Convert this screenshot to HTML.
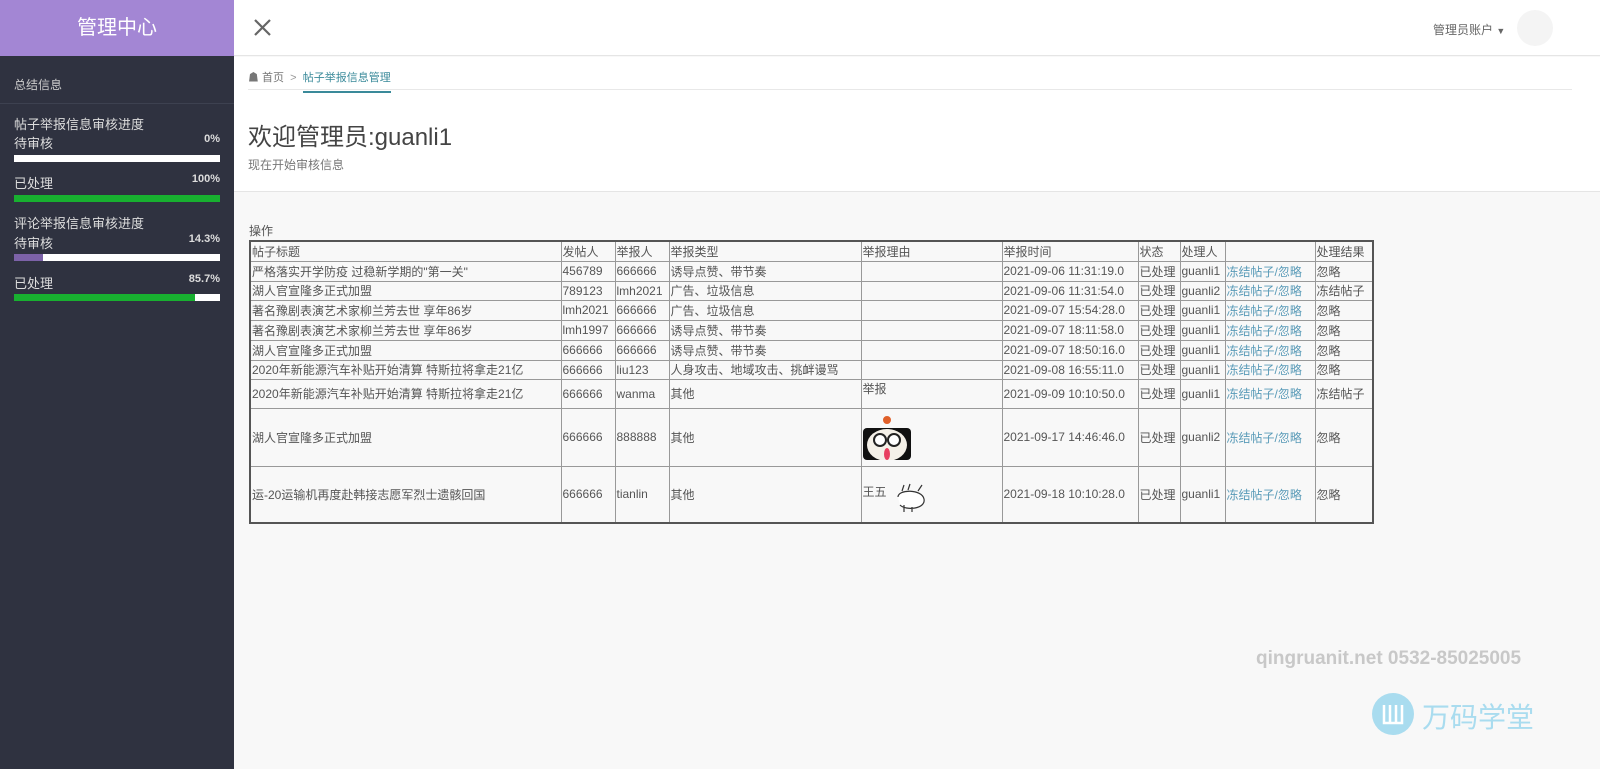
<!DOCTYPE html>
<html><head><meta charset="utf-8"><style>
*{margin:0;padding:0;box-sizing:border-box}
body{width:1600px;height:769px;overflow:hidden;background:#f8f8f8;font-family:"Liberation Sans","Noto Sans CJK SC",sans-serif;position:relative;color:#555}
#side{position:absolute;left:0;top:0;width:234px;height:769px;background:#2f3240}
#logo{height:56px;background:#a386d4;color:#fff;font-size:20px;text-align:center;line-height:56px}
.s{position:absolute;left:14px;width:206px;color:#ddd;font-size:12px}
.bar{position:absolute;left:14px;width:206px;height:7px;background:#fff}
.bar i{display:block;height:7px}
.pct{float:right;font-weight:bold;font-size:11px;color:#ddd}
#top{position:absolute;left:234px;top:0;width:1366px;height:56px;background:#fff;border-bottom:1px solid #e5e5e5}
#hdr{position:absolute;left:234px;top:57px;width:1366px;height:135px;background:#fff;border-bottom:1px solid #e5e5e5}
table{position:absolute;left:249px;top:240px;border-collapse:collapse;border:2px solid #555;font-size:12px;color:#555;table-layout:fixed}
td{border:1px solid #999;padding:0 1px;white-space:nowrap;overflow:hidden;vertical-align:middle}
a{color:#5a9bb8;text-decoration:none}
</style></head><body>
<div id="side">
<div id="logo">管理中心</div>
<div class="s" style="top:76px;color:#ccc">总结信息</div>
<div style="position:absolute;top:103px;left:0;width:234px;border-top:1px solid #3d4150"></div>
<div class="s" style="top:114px;font-size:13px">帖子举报信息审核进度</div>
<div class="s" style="top:133px;font-size:13px">待审核<span class="pct">0%</span></div>
<div class="bar" style="top:155px"></div>
<div class="s" style="top:173px;font-size:13px">已处理<span class="pct">100%</span></div>
<div class="bar" style="top:195px;background:#18b030"></div>
<div class="s" style="top:213px;font-size:13px">评论举报信息审核进度</div>
<div class="s" style="top:233px;font-size:13px">待审核<span class="pct">14.3%</span></div>
<div class="bar" style="top:254px"><i style="width:29px;background:#7c62a8"></i></div>
<div class="s" style="top:273px;font-size:13px">已处理<span class="pct">85.7%</span></div>
<div class="bar" style="top:294px"><i style="width:181px;background:#18b030"></i></div>
</div>
<div id="top">
<svg style="position:absolute;left:20px;top:19px" width="17" height="17"><path d="M1 1L16 16M16 1L1 16" stroke="#666" stroke-width="2.2"/></svg>
<div style="position:absolute;left:1199px;top:21px;font-size:12px;color:#666">管理员账户 <span style="font-size:9px">▼</span></div>
<div style="position:absolute;left:1283px;top:10px;width:36px;height:36px;border-radius:50%;background:#f4f4f4"></div>
</div>
<div id="hdr">
<div style="position:absolute;left:14px;top:12px;font-size:11px;color:#777">&#9751; 首页 &nbsp;<span style="color:#999">&gt;</span>&nbsp; <span style="color:#3a8a9a;display:inline-block;border-bottom:2px solid #3a8a9a;padding:0 0 6px">帖子举报信息管理</span></div>
<div style="position:absolute;left:14px;top:32px;width:1324px;border-top:1px solid #e8e8e8"></div>
<div style="position:absolute;left:14px;top:60px;font-size:24px;color:#444">欢迎管理员:guanli1</div>
<div style="position:absolute;left:14px;top:99px;font-size:12px;color:#777">现在开始审核信息</div>
</div>
<div style="position:absolute;left:249px;top:222px;font-size:12px;color:#555">操作</div>
<table>
<colgroup><col style="width:311px"><col style="width:54px"><col style="width:54px"><col style="width:192px"><col style="width:141px"><col style="width:136px"><col style="width:42px"><col style="width:45px"><col style="width:90px"><col style="width:58px"></colgroup>
<tr style="height:20px"><td>帖子标题</td><td>发帖人</td><td>举报人</td><td>举报类型</td><td>举报理由</td><td>举报时间</td><td>状态</td><td>处理人</td><td></td><td>处理结果</td></tr>
<tr style="height:20px"><td>严格落实开学防疫 过稳新学期的"第一关"</td><td>456789</td><td>666666</td><td>诱导点赞、带节奏</td><td></td><td>2021-09-06 11:31:19.0</td><td>已处理</td><td>guanli1</td><td><a>冻结帖子/忽略</a></td><td>忽略</td></tr>
<tr style="height:19px"><td>湖人官宣隆多正式加盟</td><td>789123</td><td>lmh2021</td><td>广告、垃圾信息</td><td></td><td>2021-09-06 11:31:54.0</td><td>已处理</td><td>guanli2</td><td><a>冻结帖子/忽略</a></td><td>冻结帖子</td></tr>
<tr style="height:20px"><td>著名豫剧表演艺术家柳兰芳去世 享年86岁</td><td>lmh2021</td><td>666666</td><td>广告、垃圾信息</td><td></td><td>2021-09-07 15:54:28.0</td><td>已处理</td><td>guanli1</td><td><a>冻结帖子/忽略</a></td><td>忽略</td></tr>
<tr style="height:20px"><td>著名豫剧表演艺术家柳兰芳去世 享年86岁</td><td>lmh1997</td><td>666666</td><td>诱导点赞、带节奏</td><td></td><td>2021-09-07 18:11:58.0</td><td>已处理</td><td>guanli1</td><td><a>冻结帖子/忽略</a></td><td>忽略</td></tr>
<tr style="height:20px"><td>湖人官宣隆多正式加盟</td><td>666666</td><td>666666</td><td>诱导点赞、带节奏</td><td></td><td>2021-09-07 18:50:16.0</td><td>已处理</td><td>guanli1</td><td><a>冻结帖子/忽略</a></td><td>忽略</td></tr>
<tr style="height:19px"><td>2020年新能源汽车补贴开始清算 特斯拉将拿走21亿</td><td>666666</td><td>liu123</td><td>人身攻击、地域攻击、挑衅谩骂</td><td></td><td>2021-09-08 16:55:11.0</td><td>已处理</td><td>guanli1</td><td><a>冻结帖子/忽略</a></td><td>忽略</td></tr>
<tr style="height:29px"><td>2020年新能源汽车补贴开始清算 特斯拉将拿走21亿</td><td>666666</td><td>wanma</td><td>其他</td><td style="vertical-align:top">举报</td><td>2021-09-09 10:10:50.0</td><td>已处理</td><td>guanli1</td><td><a>冻结帖子/忽略</a></td><td>冻结帖子</td></tr>
<tr style="height:58px"><td>湖人官宣隆多正式加盟</td><td>666666</td><td>888888</td><td>其他</td><td><svg width="48" height="46" style="display:block"><circle cx="24" cy="6" r="4" fill="#e0602a"/><rect x="0" y="14" width="48" height="32" rx="4" fill="#111"/><ellipse cx="24" cy="31" rx="20" ry="16" fill="#f4f0e8"/><circle cx="17" cy="26" r="6" fill="#fff" stroke="#222" stroke-width="2"/><circle cx="31" cy="26" r="6" fill="#fff" stroke="#222" stroke-width="2"/><ellipse cx="24" cy="40" rx="3" ry="6" fill="#e84060"/></svg></td><td>2021-09-17 14:46:46.0</td><td>已处理</td><td>guanli2</td><td><a>冻结帖子/忽略</a></td><td>忽略</td></tr>
<tr style="height:57px"><td>运-20运输机再度赴韩接志愿军烈士遗骸回国</td><td>666666</td><td>tianlin</td><td>其他</td><td style="vertical-align:top;padding-top:16px">王五 <svg width="40" height="30" style="vertical-align:top"><path d="M8 14c0-8 24-8 26 2 2 10-18 12-24 6M12 8l2-6M18 7l2-6M28 8l4-6M14 22l0 7M22 24l0 5" stroke="#333" fill="#fff" stroke-width="1.2"/></svg></td><td>2021-09-18 10:10:28.0</td><td>已处理</td><td>guanli1</td><td><a>冻结帖子/忽略</a></td><td>忽略</td></tr>
</table>
<div style="position:absolute;left:1256px;top:648px;font-size:19px;font-weight:bold;color:#c8c8c8">qingruanit.net 0532-85025005</div>
<div style="position:absolute;left:1372px;top:693px;width:42px;height:42px;border-radius:50%;background:#a9dcef"><svg width="42" height="42"><path d="M12 12v18h18V12M18 12v18M24 12v18" stroke="#fff" stroke-width="2.5" fill="none"/></svg></div>
<div style="position:absolute;left:1422px;top:696px;font-size:28px;color:#a9dcef">万码学堂</div>
</body></html>
